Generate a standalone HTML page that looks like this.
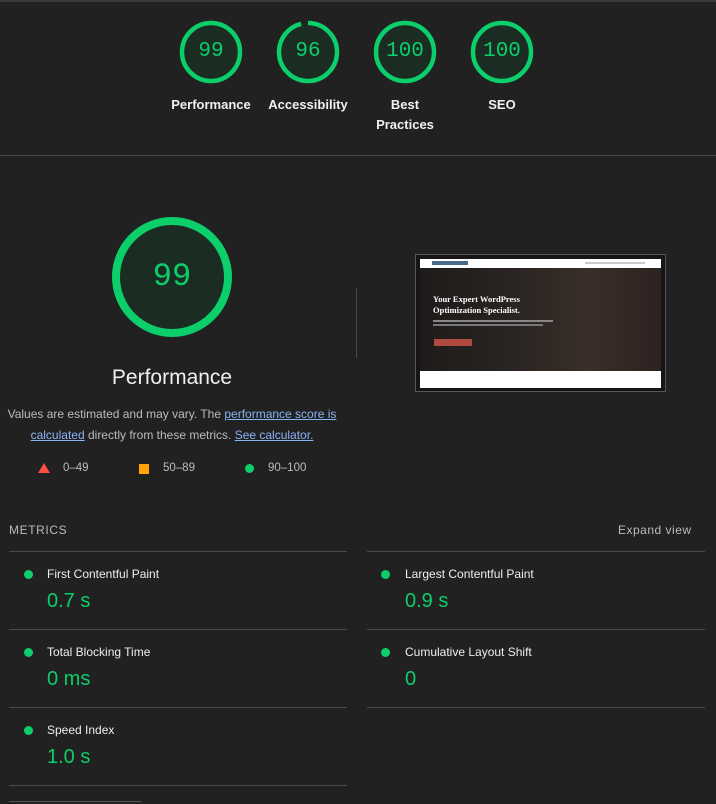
<!DOCTYPE html>
<html><head><meta charset="utf-8"><style>
*{margin:0;padding:0;box-sizing:border-box}
body{width:716px;height:804px;background:#212121;font-family:"Liberation Sans",sans-serif;color:#e8e8e8;position:relative;overflow:hidden}
.abs{position:absolute}
.gl{position:absolute;width:100px;text-align:center;font-weight:bold;font-size:13px;color:#f0f0f0;line-height:20px}
.gn{position:absolute;width:62px;text-align:center;font-family:"Liberation Mono",monospace;font-size:21px;color:#0cce6b;line-height:62px}
.line{position:absolute;height:1px;background:#4a4a4a}
.dot{position:absolute;width:9px;height:9px;border-radius:50%;background:#0cce6b}
.ml{position:absolute;font-size:12px;color:#eee}
.mv{position:absolute;font-size:20px;color:#0cce6b}
a{color:#8ab4f8;text-decoration:underline}
</style></head><body>
<div class="line" style="top:0;left:0;width:716px;height:2px;background:#3a3a3a"></div>

<svg class="abs" style="left:0;top:0" width="716" height="160">
<g fill="#1b2c22" stroke="#0cce6b" stroke-width="4.5">
<circle cx="211" cy="52" r="29"/>
<circle cx="405" cy="52" r="29"/>
<circle cx="502" cy="52" r="29"/>
</g>
<circle cx="308" cy="52" r="29" fill="#1b2c22"/>
<circle cx="308" cy="52" r="29" fill="none" stroke="#0cce6b" stroke-width="4.5" stroke-dasharray="175 7.2" transform="rotate(-90 308 52)"/>
</svg>
<div class="gn" style="left:180px;top:21px">99</div>
<div class="gn" style="left:277px;top:21px">96</div>
<div class="gn" style="left:374px;top:21px">100</div>
<div class="gn" style="left:471px;top:21px">100</div>
<div class="gl" style="left:161px;top:95px">Performance</div>
<div class="gl" style="left:258px;top:95px">Accessibility</div>
<div class="gl" style="left:355px;top:95px">Best<br>Practices</div>
<div class="gl" style="left:452px;top:95px">SEO</div>
<div class="line" style="top:155px;left:0;width:716px"></div>

<svg class="abs" style="left:100px;top:205px" width="144" height="144">
<circle cx="72" cy="72" r="56" fill="#1b2c22" stroke="#0cce6b" stroke-width="8"/>
</svg>
<div class="abs" style="left:112px;top:257px;width:120px;text-align:center;font-family:'Liberation Mono',monospace;font-size:32px;color:#0cce6b;line-height:40px">99</div>
<div class="abs" style="left:72px;top:366px;width:200px;text-align:center;font-size:21px;color:#f0f0f0">Performance</div>
<div class="abs" style="left:4px;top:404px;width:336px;text-align:center;font-size:12px;line-height:21px;color:#bbb">Values are estimated and may vary. The <a>performance score is calculated</a> directly from these metrics. <a>See calculator.</a></div>
<svg class="abs" style="left:38px;top:463px" width="12" height="11"><polygon points="6,0 12,10 0,10" fill="#ff4e42"/></svg>
<div class="abs" style="left:63px;top:462px;font-size:11.5px;color:#bbb">0–49</div>
<div class="abs" style="left:139px;top:464px;width:10px;height:10px;background:#ffa400"></div>
<div class="abs" style="left:163px;top:462px;font-size:11.5px;color:#bbb">50–89</div>
<div class="abs" style="left:245px;top:464px;width:9px;height:9px;border-radius:50%;background:#0cce6b"></div>
<div class="abs" style="left:268px;top:462px;font-size:11.5px;color:#bbb">90–100</div>

<div class="abs" style="left:356px;top:288px;width:1px;height:70px;background:#4a4a4a"></div>
<div class="abs" style="left:415px;top:254px;width:251px;height:138px;border:1px solid #555;background:#161616">
 <div class="abs" style="left:4px;top:4px;width:241px;height:129px;background:#fff">
  <div class="abs" style="left:0;top:9px;width:241px;height:103px;background:linear-gradient(90deg,#1e1b1a,#2a2523 40%,#3a2e28 70%,#2c2220)"></div>
  <div class="abs" style="left:13px;top:35px;font-family:'Liberation Serif',serif;font-weight:bold;font-size:8.5px;color:#fff;line-height:11px">Your Expert WordPress<br>Optimization Specialist.</div>
  <div class="abs" style="left:13px;top:61px;width:120px;height:2px;background:#888"></div>
  <div class="abs" style="left:13px;top:65px;width:110px;height:2px;background:#777"></div>
  <div class="abs" style="left:14px;top:80px;width:38px;height:7px;background:#b04a40"></div>
  <div class="abs" style="left:12px;top:2px;width:36px;height:4px;background:#4a6a8a"></div>
  <div class="abs" style="left:165px;top:3px;width:60px;height:2px;background:#ccc"></div>
 </div>
</div>

<div class="abs" style="left:9px;top:523px;font-size:12px;letter-spacing:.6px;color:#bbb">METRICS</div>
<div class="abs" style="left:618px;top:523px;font-size:12px;letter-spacing:.5px;color:#bbb">Expand view</div>
<div class="line" style="top:551px;left:9px;width:338px"></div>
<div class="line" style="top:629px;left:9px;width:338px"></div>
<div class="line" style="top:707px;left:9px;width:338px"></div>
<div class="line" style="top:785px;left:9px;width:338px"></div>
<div class="line" style="top:551px;left:367px;width:338px"></div>
<div class="line" style="top:629px;left:367px;width:338px"></div>
<div class="line" style="top:707px;left:367px;width:338px"></div>

<div class="dot" style="left:24px;top:570px"></div><div class="ml" style="left:47px;top:567px">First Contentful Paint</div><div class="mv" style="left:47px;top:590px">0.7 s</div>
<div class="dot" style="left:24px;top:648px"></div><div class="ml" style="left:47px;top:645px">Total Blocking Time</div><div class="mv" style="left:47px;top:668px">0 ms</div>
<div class="dot" style="left:24px;top:726px"></div><div class="ml" style="left:47px;top:723px">Speed Index</div><div class="mv" style="left:47px;top:746px">1.0 s</div>
<div class="dot" style="left:381px;top:570px"></div><div class="ml" style="left:405px;top:567px">Largest Contentful Paint</div><div class="mv" style="left:405px;top:590px">0.9 s</div>
<div class="dot" style="left:381px;top:648px"></div><div class="ml" style="left:405px;top:645px">Cumulative Layout Shift</div><div class="mv" style="left:405px;top:668px">0</div>
<div class="abs" style="left:9px;top:801px;width:132px;height:1px;background:#555"></div>
</body></html>
